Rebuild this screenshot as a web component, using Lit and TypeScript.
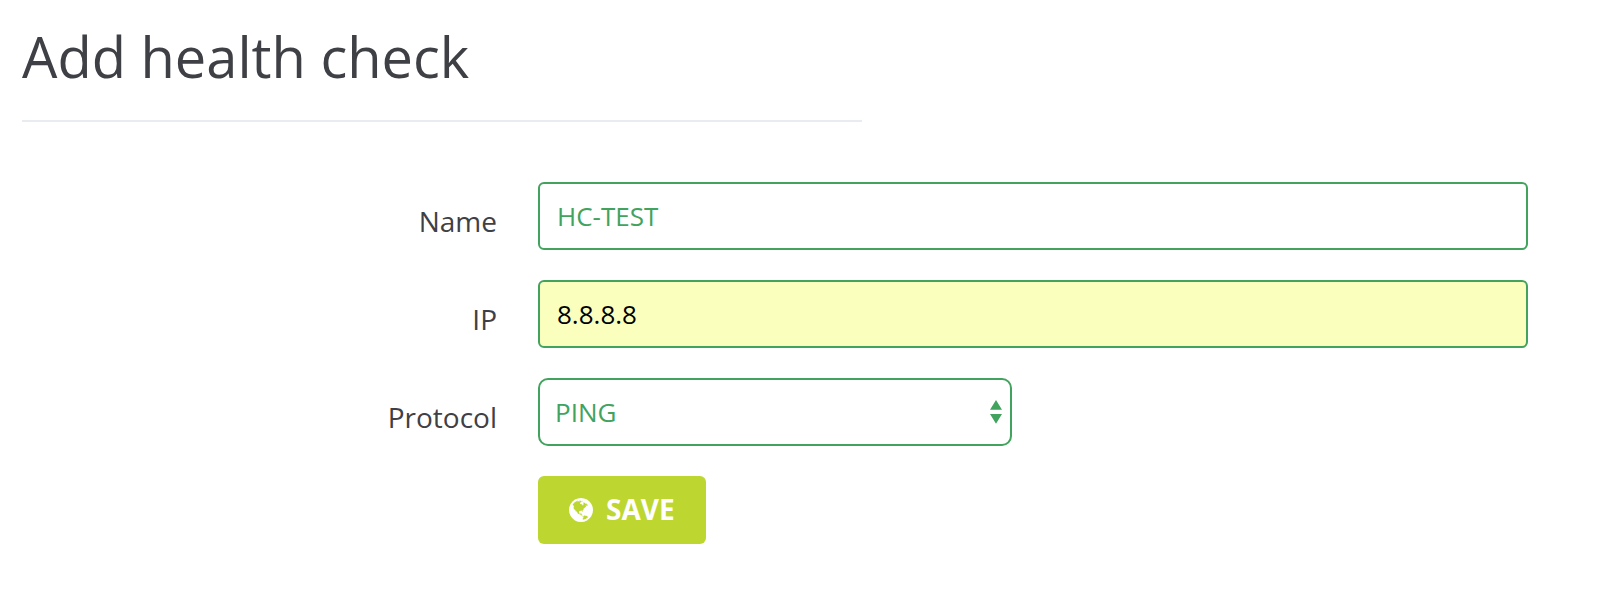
import { LitElement, html, css } from "lit";
import { customElement } from "lit/decorators.js";

const GLOBE =
  "M896 128q209 0 385.5 103t279.5 279.5 103 385.5-103 385.5-279.5 279.5-385.5 103-385.5-103-279.5-279.5-103-385.5 103-385.5 279.5-279.5 385.5-103zm274 521q-2 1-9.5 9.5t-13.5 9.5q2 0 4.5-5t5-11 3.5-7q6-7 22-15 14-6 52-12 34-8 51 11-2-2 9.5-13t14.5-12q3-2 15-4.5t15-7.5l2-22q-12 1-17.5-7t-6.5-21q0 2-6 8 0-7-4.5-8t-11.5 1-9 1q-10-3-15-7.5t-8-16.5-4-15q-2-5-9.5-11t-9.5-10q-1-2-2.5-5.5t-3-6.5-4-5.5-5.5-2.5-7 5-7.5 10-4.5 5q-3-2-6-1.5t-4.5 1-4.5 3-5 3.5q-3 2-8.5 3t-8.5 2q15-5-1-11-10-4-16-3 9-4 7.5-12t-8.5-14h5q-1-4-8.5-8.5t-17.5-8.5-13-6q-8-5-34-9.5t-33-.5q-5 6-4.5 10.5t4 14 3.5 12.5q1 6-5.5 13t-6.5 12q0 7 14 15.5t10 21.5q-3 8-16 16t-16 12q-5 8-1.5 18.5t10.5 16.5q2 2 1.5 4t-3.5 4.5-5.5 4-6.5 3.5l-3 2q-11 5-20.5-6t-13.5-26q-7-25-16-30-23-8-29 1-5-13-41-26-25-9-58-4 6-1 0-15-7-15-19-12 3-6 4-17.5t1-13.5q3-13 12-23 1-1 7-8.5t9.5-13.5.5-6q35 4 50-11 5-5 11.5-17t10.5-17q9-6 14-5.5t14.5 5.5 14.5 5q14 1 15.5-11t-7.5-20q12 1 3-17-4-7-8-9-12-4-27 5-8 4 2 8-1-1-9.5 10.5t-16.5 17.5-16-5q-1-1-5.5-13.5t-9.5-13.5q-8 0-16 15 3-8-11-15t-24-8q19-12-8-27-7-4-20.5-5t-19.5 4q-5 7-5.5 11.5t5 8 10.5 5.5 11.5 4 8.5 3q14 10 8 14-2 1-8.5 3.5t-11.5 4.5-6 4q-3 4 0 14t-2 14q-5-5-9-17.5t-7-16.5q7 9-25 6l-10-1q-4 0-16 2t-20.5 1-13.5-8q-4-8 0-20 1-4 4-2-4-3-11-9.5t-10-8.5q-46 15-94 41 6 1 12-1 5-2 13-6.5t10-5.5q34-14 42-7l5-5q14 16 20 25-7-4-30-1-20 6-22 12 7 12 5 18-4-3-11.5-10t-14.5-11-15-5q-16 0-22 1-146 80-235 222 7 7 12 8 4 1 5 9t2.5 11 11.5-3q9 8 3 19 1-1 44 27 19 17 21 21 3 11-10 18-1-2-9-9t-9-4q-3 5 .5 18.5t10.5 12.5q-7 0-9.5 16t-2.5 35.5-1 23.5l2 1q-3 12 5.5 34.5t21.5 19.5q-13 3 20 43 6 8 8 9 3 2 12 7.5t15 10 10 10.5q4 5 10 22.5t14 23.5q-2 6 9.5 20t10.5 23q-1 0-2.5 1t-2.5 1q3 7 15.5 14t15.5 13q1 3 2 10t3 11 8 2q2-20-24-62-15-25-17-29-3-5-5.5-15.5t-4.5-14.5q2 0 6 1.5t8.5 3.5 7.5 4 2 3q-3 7 2 17.5t12 18.5 17 19 12 13q6 6 14 19.5t0 13.5q9 0 20 10t17 20q5 8 8 26t5 24q2 7 8.5 13.5t12.5 9.5l16 8 13 7q5 2 18.5 10.5t21.5 11.5q10 4 16 4t14.5-2.5 13.5-3.5q15-2 29 15t21 21q36 19 55 11-2 1 .5 7.5t8 15.5 9 14.5 5.5 8.5q5 6 18 15t18 15q6-4 7-9-3 8 7 20t18 10q14-3 14-32-31 15-49-18 0-1-2.5-5.5t-4-8.5-2.5-8.5 0-7.5 5-3q9 0 10-3.5t-2-12.5-4-13q-1-8-11-20t-12-15q-5 9-16 8t-16-9q0 1-1.5 5.5t-1.5 6.5q-13 0-15-1 1-3 2.5-17.5t3.5-22.5q1-4 5.5-12t7.5-14.5 4-12.5-4.5-9.5-17.5-2.5q-19 1-26 20-1 3-3 10.5t-5 11.5-9 7q-7 3-24 2t-24-5q-13-8-22.5-29t-9.5-37q0-10 2.5-26.5t3-25-5.5-24.5q3-2 9-9.5t10-10.5q2-1 4.5-1.5t4.5 0 4-1.5 3-6q-1-1-4-3-3-3-4-3 7 3 28.5-1.5t27.5 1.5q15 11 22-2 0-1-2.5-9.5t-.5-13.5q5 27 29 9 3 3 15.5 5t17.5 5q3 2 7 5.5t5.5 4.5 5-.5 8.5-6.5q10 14 12 24 11 40 19 44 7 3 11 2t4.5-9.5 0-14-1.5-12.5l-1-8v-18l-1-8q-15-3-18.5-12t1.5-18.5 15-18.5q1-1 8-3.5t15.5-6.5 12.5-8q21-19 15-35 7 0 11-9-1 0-5-3t-7.5-5-4.5-2q9-5 2-16 5-3 7.5-11t7.5-10q9 12 21 2 8-8 1-16 5-7 20.5-10.5t18.5-9.5q7 2 8-2t1-12 3-12q4-5 15-9t13-5l17-11q3-4 0-4 18 2 31-11 10-11-6-20 3-6-3-9.5t-15-5.5q3-1 11.5-.5t10.5-1.5q15-10-7-16-17-5-43 12zm-163 877q206-36 351-189-3-3-12.5-4.5t-12.5-3.5q-18-7-24-8 1-7-2.5-13t-8-9-12.5-8-11-7q-2-2-7-6t-7-5.5-7.5-4.5-8.5-2-10 1l-3 1q-3 1-5.5 2.5t-5.5 3-4 3 0 2.5q-21-17-36-22-5-1-11-5.5t-10.5-7-10-1.5-11.5 7q-5 5-6 15t-2 13q-7-5 0-17.5t2-18.5q-3-6-10.5-4.5t-12 4.5-11.5 8.5-9 6.5-8.5 5.5-8.5 7.5q-3 4-6 12t-5 11q-2-4-11.5-6.5t-9.5-5.5q2 10 4 35t5 38q7 31-12 48-27 25-29 40-4 22 12 26 0 7-8 20.5t-7 21.5q0 6 2 16z";

@customElement("app-root")
export class AppRoot extends LitElement {
  static styles = css`
    :host {
      display: block;
      box-sizing: border-box;
      height: 598px;
      padding: 20px 70px 0 22px;
      overflow: hidden;
      background: #fff;
      color: #3f4045;
      font-family: "Open Sans", "Noto Sans", sans-serif;
    }
    .title {
      box-sizing: border-box;
      width: 840px;
      height: 102px;
      margin: 0;
      border-bottom: 2px solid #e8ebef;
      font-size: 56px;
      font-weight: 400;
      line-height: 72px;
    }
    .form {
      display: grid;
      grid-template-columns: 475px 990px;
      grid-auto-rows: 68px;
      gap: 30px 41px;
      padding-top: 60px;
    }
    .label {
      padding-top: 20px;
      font-size: 28px;
      line-height: 38px;
      text-align: right;
    }
    .field {
      box-sizing: border-box;
      width: 100%;
      height: 68px;
      margin: 0;
      padding: 0 17px;
      border: 2px solid #41a35d;
      border-radius: 6px;
      outline: none;
      background: #fff;
      color: #41a35d;
      font: 400 26px "Open Sans", "Noto Sans", sans-serif;
      appearance: none;
    }
    .filled {
      background: #faffbd;
      color: #000;
    }
    .picker {
      position: relative;
      width: 474px;
    }
    .select {
      padding: 0 15px;
      border-radius: 10px;
    }
    .arrows {
      position: absolute;
      top: 22px;
      right: 10px;
      width: 12px;
      height: 24px;
      fill: #41a35d;
      pointer-events: none;
    }
    .save {
      grid-column: 2;
      justify-self: start;
      display: flex;
      align-items: center;
      gap: 13px;
      box-sizing: border-box;
      width: 168px;
      height: 68px;
      padding: 0 0 0 31px;
      border: 0;
      border-radius: 6px;
      background: #bdd730;
      color: #fff;
      font: 700 28px/38px "Open Sans", "Noto Sans", sans-serif;
    }
    .caption {
      padding-bottom: 2px;
    }
    .globe {
      flex: none;
      width: 24px;
      height: 24px;
      fill: currentColor;
    }
  `;

  render() {
    return html`
      <h1 class="title">Add health check</h1>
      <form class="form">
        <label class="label" for="name">Name</label>
        <input class="field" id="name" type="text" value="HC-TEST" />
        <label class="label" for="ip">IP</label>
        <input class="field filled" id="ip" type="text" value="8.8.8.8" />
        <label class="label" for="protocol">Protocol</label>
        <div class="picker">
          <select class="field select" id="protocol">
            <option>PING</option>
          </select>
          <svg class="arrows" viewBox="0 0 12 24">
            <path d="M6 0l6 9.7H0zM0 14h12l-6 9.7z" />
          </svg>
        </div>
        <button class="save" type="button">
          <svg class="globe" viewBox="128 128 1536 1536"><path d=${GLOBE} /></svg>
          <span class="caption">SAVE</span>
        </button>
      </form>
    `;
  }
}
